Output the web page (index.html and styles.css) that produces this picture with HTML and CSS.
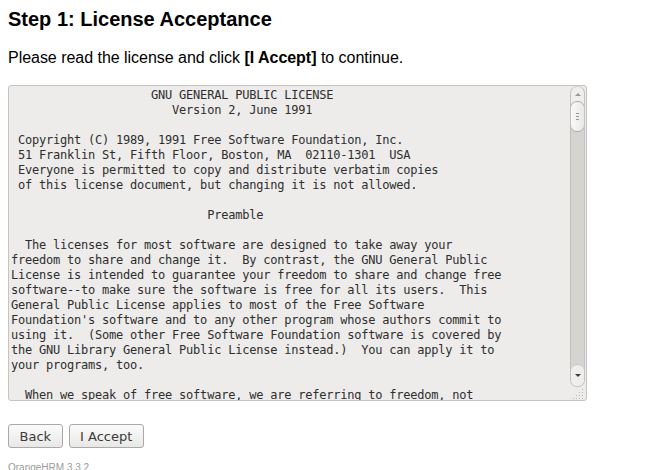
FILE: index.html
```html
<!DOCTYPE html>
<html lang="en">
<head>
<meta charset="UTF-8">
<title>OrangeHRM Installation - License Acceptance</title>
<link rel="stylesheet" href="styles.css">
</head>
<body>
<h1>Step 1: License Acceptance</h1>
<p class="intro">Please read the license and click <b>[I Accept]</b> to continue.</p>

<div class="license-box">
<textarea class="license-text" readonly>                    GNU GENERAL PUBLIC LICENSE
                       Version 2, June 1991

 Copyright (C) 1989, 1991 Free Software Foundation, Inc.
 51 Franklin St, Fifth Floor, Boston, MA  02110-1301  USA
 Everyone is permitted to copy and distribute verbatim copies
 of this license document, but changing it is not allowed.

                            Preamble

  The licenses for most software are designed to take away your
freedom to share and change it.  By contrast, the GNU General Public
License is intended to guarantee your freedom to share and change free
software--to make sure the software is free for all its users.  This
General Public License applies to most of the Free Software
Foundation's software and to any other program whose authors commit to
using it.  (Some other Free Software Foundation software is covered by
the GNU Library General Public License instead.)  You can apply it to
your programs, too.

  When we speak of free software, we are referring to freedom, not
price.  Our General Public Licenses are designed to make sure that you
have the freedom to distribute copies of free software (and charge for
this service if you wish), that you receive source code or can get it
if you want it, that you can change the software or use pieces of it
in new free programs; and that you know you can do these things.
</textarea>
  <div class="scrollbar">
    <div class="track">
      <div class="sb-btn sb-up"><span class="arrow-up"></span></div>
      <div class="thumb"><span class="grip"></span></div>
      <div class="trough"></div>
      <div class="sb-btn sb-down"><span class="arrow-down"></span></div>
    </div>
    <svg class="resizer" width="12" height="12" viewBox="0 0 12 12">
      <g fill="#b9b7b4">
        <rect x="9" y="1" width="1" height="1"/>
        <rect x="6" y="4" width="1" height="1"/><rect x="9" y="4" width="1" height="1"/>
        <rect x="3" y="7" width="1" height="1"/><rect x="6" y="7" width="1" height="1"/><rect x="9" y="7" width="1" height="1"/>
        <rect x="0" y="10" width="1" height="1"/><rect x="3" y="10" width="1" height="1"/><rect x="6" y="10" width="1" height="1"/><rect x="9" y="10" width="1" height="1"/>
      </g>
    </svg>
  </div>
</div>

<div class="actions">
  <button class="btn" type="button">Back</button>
  <button class="btn" type="button">I Accept</button>
</div>

<div class="footer">OrangeHRM 3.3.2</div>
</body>
</html>
```

FILE: styles.css
```css
* { box-sizing: border-box; }
body { margin: 0; padding: 8px; font-family: 'Liberation Sans', Arial, sans-serif; color: #000; background: #fff; }

h1 { font-size: 20px; font-weight: bold; margin: 0 0 18px; line-height: 23px; }
.intro { font-size: 16px; margin: 0 0 18px; line-height: 18px; letter-spacing: -0.03px; }

.license-box { display: flex; width: 579px; height: 316px; border: 1px solid #c6c4c1; border-radius: 3px; background: #edeceb; overflow: hidden; }
.license-text { flex: 1; border: none; background: transparent; padding: 2px; margin: 0; font-family: 'DejaVu Sans Mono', monospace; font-size: 12px; line-height: 15px; letter-spacing: -0.22px; color: #2e2e2e; resize: none; overflow: hidden; white-space: pre; outline: none; }

.scrollbar { width: 16px; display: flex; flex-direction: column; }
.track { flex: 1; display: flex; flex-direction: column; width: 15px; border: 1px solid #c3c1be; border-top-color: #d6d4d1; border-radius: 7px; background: #efeeed; overflow: hidden; margin-right: 1px; }
.sb-btn { height: 14px; display: flex; align-items: center; justify-content: center; flex-shrink: 0; }
.sb-down { height: 22px; border-top: 1px solid #c9c7c4; border-radius: 7px 7px 0 0; margin-top: -6px; background: #efeeed; position: relative; }
.arrow-up { width: 0; height: 0; border-left: 3px solid transparent; border-right: 3px solid transparent; border-bottom: 3px solid #9a9895; }
.arrow-down { width: 0; height: 0; border-left: 3px solid transparent; border-right: 3px solid transparent; border-top: 3px solid #3c3c3c; }
.thumb { height: 31px; flex-shrink: 0; margin: 0 -1px; border: 1px solid #aeaca9; border-radius: 7px; background: linear-gradient(to right, #f9f9f9, #e9e8e7); display: flex; align-items: center; justify-content: center; position: relative; z-index: 1; }
.grip { width: 3px; height: 7px; background: linear-gradient(#9c9a97 1px, transparent 1px, transparent 3px, #9c9a97 3px, #9c9a97 4px, transparent 4px, transparent 6px, #9c9a97 6px); }
.trough { flex: 1; background: #d6d4d1; margin-top: -8px; }
.resizer { flex-shrink: 0; margin: 1px 0 0 3px; }

.actions { display: flex; gap: 6px; margin-top: 23px; }
.btn { font-family: 'DejaVu Sans', sans-serif; font-size: 13px; color: #3a3a3a; height: 24px; padding: 0 10.5px; border: 1px solid #aaa9a7; border-radius: 3px; background: linear-gradient(#fbfbfb, #e9e8e7); }

.footer { margin-top: 14px; font-size: 10px; color: #9a9a9a; }
```
